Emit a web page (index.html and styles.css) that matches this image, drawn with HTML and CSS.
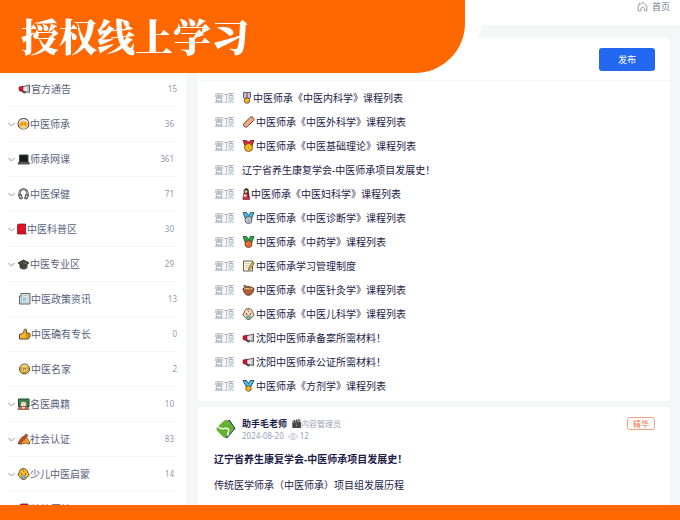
FILE: index.html
```html
<!DOCTYPE html>
<html lang="zh-CN">
<head>
  <meta charset="UTF-8">
  <meta name="viewport" content="width=device-width, initial-scale=1.0">
  <title>授权线上学习</title>
  <link rel="stylesheet" href="styles.css">
</head>
<body>
  <svg class="sprite" aria-hidden="true">
    <symbol id="chevron" viewBox="0 0 14 14"><path d="M1 4l6 6 6-6" fill="none" stroke="#8a93a6" stroke-width="2"/></symbol>
    <symbol id="home" viewBox="0 0 20 20"><path d="M5 18H2V9l2-1V4l2 2 4-4 8 7v9h-4v-4c0-3-7-3-7 0v4H5" fill="none" stroke="#7d8596" stroke-width="1.4"/></symbol>
    <symbol id="eye" viewBox="0 0 20 14"><path d="M1 7c4-8 14-8 18 0-4 8-14 8-18 0z" fill="none" stroke="#a3acbd" stroke-width="1.4"/><circle cx="10" cy="7" r="3" fill="none" stroke="#a3acbd" stroke-width="1.4"/></symbol>
    <symbol id="horn" viewBox="0 0 24 24"><path d="M8 15l2 5h4l-1-4" fill="#999" stroke="#222" stroke-width="1.5"/><path d="M7 8l15-4v15L7 16z" fill="#e5e9e9" stroke="#333" stroke-width="1.6"/><path d="M1 8l8-2v12l-8-3z" fill="#d81228" stroke="#601018"/><path d="M19 5v13" stroke="#888" stroke-width="1.5"/></symbol>
    <symbol id="elder" viewBox="0 0 24 24"><path d="M2 16C-1 6 5 1 12 1s13 5 10 15c-2 8-18 8-20 0z" fill="#e4e2de" stroke="#3c3a38" stroke-width="2"/><path d="M4 11c1-6 15-6 16 0v6c-2 6-14 6-16 0z" fill="#fbae24"/><path d="M6 18c3-4 9-4 12 0-1 5-11 5-12 0z" fill="#f0cfa0"/><path d="M7 12h3m4 0h3" stroke="#8a5a20" stroke-width="1.6"/></symbol>
    <symbol id="laptop" viewBox="0 0 24 24"><path d="M4 4h17v14H4z" fill="#181b1e" stroke="#3c4144" stroke-width="2"/><path d="M3 18h19l2 4H1z" fill="#777" stroke="#222" stroke-width="1.5"/></symbol>
    <symbol id="headset" viewBox="0 0 24 24"><path d="M4 16C1-2 23-2 20 16" fill="none" stroke="#3a3a3a" stroke-width="4"/><path d="M4 15C2-1 22-1 20 15" fill="none" stroke="#ddd" stroke-width="1.6"/><path d="M2 14l5-2 3 9-5 1zM22 14l-5-2-3 9 5 1z" fill="#b5b5b5" stroke="#2c2c2c" stroke-width="1.6"/></symbol>
    <symbol id="book" viewBox="0 0 20 24"><path d="M3 2h14v17l2 3H1V4z" fill="#e81027" stroke="#7e1720" stroke-width="1.5"/><path d="M4 2v16M2 20l2-2h13" fill="none" stroke="#b01626" stroke-width="1.3"/></symbol>
    <symbol id="cap" viewBox="0 0 24 24"><path d="M5 11v8c4 4 11 4 14 0v-8" fill="#514f46" stroke="#222" stroke-width="1.6"/><path d="M1 10l11-6 11 6-11 7z" fill="#4b4c45" stroke="#20211f" stroke-width="1.6"/><path d="M12 10l7 2v6" fill="none" stroke="#a08433" stroke-width="1.3"/></symbol>
    <symbol id="news" viewBox="0 0 24 24"><path d="M5 1h18v21H2V6h3z" fill="#dce6ea" stroke="#4a565c" stroke-width="1.8"/><path d="M6 5v15" stroke="#8a979e" stroke-width="1.3"/><path d="M9 5h11M9 18h11" stroke="#a9b7bf" stroke-width="1.5"/><path d="M9 9h6v6H9z" fill="#8fc3de"/><path d="M17 9h3m-3 4h3" stroke="#a9b7bf" stroke-width="1.5"/></symbol>
    <symbol id="thumb" viewBox="0 0 24 24"><path d="M2 13l6-2c4-3 2-9 6-9 4 1 1 7 1 8h6c4 1 2 11-2 12H2z" fill="#f9b62a" stroke="#3d2b14" stroke-width="1.7"/><path d="M15 14h6m-6 4h6" stroke="#704b18" stroke-width="1.3"/></symbol>
    <symbol id="glasses" viewBox="0 0 24 24"><circle cx="12" cy="12" r="10" fill="#f7c548" stroke="#5c4b2d" stroke-width="2"/><path d="M4 8C7 1 17 1 20 8c-5-2-11-2-16 0z" fill="#e6d9a8"/><path d="M5 10h5v4H5zM14 10h5v4h-5zM10 11h4" fill="#ffe8a6" stroke="#8a7038" stroke-width="1.2"/><path d="M8 18q4 2 8 0" fill="none" stroke="#6b4720" stroke-width="1.4"/></symbol>
    <symbol id="teacher" viewBox="0 0 24 24"><path d="M2 2h21v15H2z" fill="#2b9650" stroke="#184927" stroke-width="2"/><path d="M5 19v-9c0-6 14-6 14 0v9" fill="#8b8885" stroke="#444"/><path d="M7 10c2-3 8-3 10 0v6H7z" fill="#f5d9bf"/><path d="M1 23c1-7 6-7 9-5h4c5-2 8-2 9 5z" fill="#d9604b" stroke="#45312d"/><path d="M8 18l4 4 4-4z" fill="#eee"/></symbol>
    <symbol id="writing" viewBox="0 0 24 24"><path d="M2 22C3 13 9 6 15 7c6 2 5 8 9 10v5l-8-2-7 2z" fill="#fda321" stroke="#5a3317" stroke-width="1.5"/><path d="M2 20L17 2l4 3L6 21z" fill="#d8492e" stroke="#50312b" stroke-width="1.3"/><path d="M10 17c2-3 6-4 8-2" fill="none" stroke="#a8651c" stroke-width="1.5"/></symbol>
    <symbol id="baby" viewBox="0 0 24 24"><path d="M3 10C5 1 8 2 12 1c5 1 7 2 9 9 4 4 1 7-1 7-4 8-12 8-16 0-3-1-4-5-1-7z" fill="#fbbd33" stroke="#543b1c" stroke-width="1.8"/><path d="M12 2c-4 2 2 4 0 6" fill="none" stroke="#654216" stroke-width="1.4"/><circle cx="8" cy="12" r="1.3" fill="#382812"/><circle cx="16" cy="12" r="1.3" fill="#382812"/><ellipse cx="12" cy="18" rx="4" ry="3" fill="#6cc1e0" stroke="#39758b"/></symbol>
    <symbol id="infant" viewBox="0 0 24 24"><path d="M3 10C5 1 8 2 12 1c5 1 7 2 9 9 4 4 1 7-1 7-4 8-12 8-16 0-3-1-4-5-1-7z" fill="#fad6bb" stroke="#4d4037" stroke-width="1.8"/><path d="M12 2c-4 2 2 4 0 6" fill="none" stroke="#63483b" stroke-width="1.4"/><circle cx="8" cy="12" r="1.3" fill="#30231d"/><circle cx="16" cy="12" r="1.3" fill="#30231d"/><ellipse cx="12" cy="18" rx="4" ry="3" fill="#64c3aa" stroke="#31765e"/></symbol>
    <symbol id="ribbon" viewBox="0 0 18 24"><path d="M2 1h14v10l-5 4H7l-5-4z" fill="#b1c9e4" stroke="#35414f" stroke-width="1.6"/><path d="M9 1v12" stroke="#e14e4e" stroke-width="3"/><circle cx="9" cy="17" r="5.5" fill="#f5b82c" stroke="#493b20" stroke-width="1.6"/></symbol>
    <symbol id="bread" viewBox="0 0 24 24"><path d="M3 15L15 3c4-4 10 2 7 6L10 21c-4 4-11-2-7-6z" fill="#f2a983" stroke="#593525" stroke-width="1.8"/><path d="M8 14l2 2m3-7l2 2" stroke="#dd8d68" stroke-width="1.4"/></symbol>
    <symbol id="medal-gold" viewBox="0 0 24 24"><path d="M1 1h7l4 3 4-3h7l-5 13H6z" fill="#dd2537" stroke="#521c21" stroke-width="1.5"/><circle cx="12" cy="15" r="8" fill="#f8b91c" stroke="#5c421b" stroke-width="1.6"/><path d="M12 12v6" stroke="#e39a1a" stroke-width="2"/></symbol>
    <symbol id="medal-silver" viewBox="0 0 24 24"><path d="M1 1h7l4 6 4-6h7l-5 13H6z" fill="#46b5e8" stroke="#1c3c52" stroke-width="1.5"/><circle cx="12" cy="16" r="7" fill="#c6ced2" stroke="#3c464b" stroke-width="1.6"/><path d="M10 14h4l-3 5h4" fill="none" stroke="#8b969c" stroke-width="1.4"/></symbol>
    <symbol id="medal-bronze" viewBox="0 0 24 24"><path d="M1 1h7l4 6 4-6h7l-5 13H6z" fill="#22a749" stroke="#173d21" stroke-width="1.5"/><circle cx="12" cy="16" r="7" fill="#ed7439" stroke="#572b19" stroke-width="1.6"/><path d="M10 13h4l-2 3 2 3h-4" fill="none" stroke="#c9572b" stroke-width="1.4"/></symbol>
    <symbol id="medal-sport" viewBox="0 0 24 24"><path d="M1 1h7l4 6 4-6h7l-7 13H8z" fill="#4bc0ef" stroke="#173a4d" stroke-width="1.7"/><circle cx="12" cy="17" r="5.5" fill="#f7b81f" stroke="#59431d" stroke-width="1.6"/></symbol>
    <symbol id="mother" viewBox="0 0 16 24"><path d="M4 9C2-1 14-1 13 7l2 15H2z" fill="#33202a" stroke="#221b1c"/><circle cx="8" cy="7" r="3" fill="#f2bd96"/><path d="M3 12l8-2 4 13H2z" fill="#d92d40" stroke="#501f25"/><circle cx="6" cy="15" r="3" fill="#f6d6bd"/></symbol>
    <symbol id="memo" viewBox="0 0 24 24"><path d="M2 2h18v20H2z" fill="#fff6d9" stroke="#514b3c" stroke-width="1.8"/><path d="M5 7h11M5 11h10M5 15h8" stroke="#bdb596" stroke-width="1.3"/><path d="M13 15L20 4l4 2-8 12-4 2z" fill="#edb748" stroke="#4e402b" stroke-width="1.2"/></symbol>
    <symbol id="bowl" viewBox="0 0 24 24"><path d="M1 9c2 18 20 18 22 0-6-4-15-5-22 0z" fill="#b65f32" stroke="#3d251b" stroke-width="1.7"/><ellipse cx="12" cy="9" rx="9" ry="3" fill="#e9b37c" stroke="#56341d"/><path d="M2 3l14 5" stroke="#8b4e2d" stroke-width="3"/></symbol>
    <symbol id="clapper" viewBox="0 0 24 24"><path d="M2 9h21v14H2z" fill="#37383a" stroke="#17181a" stroke-width="1.5"/><path d="M1 5l20-4 1 5L2 9z" fill="#eee" stroke="#222"/><path d="M5 4l3 4m3-5l3 4m3-5l3 4" stroke="#222" stroke-width="3"/><path d="M5 13h15m-15 5h15M12 11v10" stroke="#aaa"/></symbol>
    <symbol id="logo" viewBox="0 0 42 42"><path d="M24 2h5l12 18-17 20h-6l17-20z" fill="#28298f"/><path d="M2 18L16 4q4-3 10-1 2 1 3 3l8 11q2 3 0 6L23 38q-4 3-8 0L2 24q-2-3 0-6z" fill="#65b32f"/><path d="M3 15q6 7 14 5c9-2 12 3 8 9-1 2 0 4 2 5" fill="none" stroke="#fff" stroke-width="3"/></symbol>
  </svg>

  <div class="banner">
    <h1>授权线上学习</h1>
  </div>

  <header class="topbar">
    <a class="home-link" href="#"><svg class="home-icon"><use href="#home"/></svg>首页</a>
  </header>

  <div class="layout">
    <nav class="sidebar">
      <a class="cat leaf" href="#"><svg class="emoji"><use href="#horn"/></svg><span class="cat-name">官方通告</span><span class="count">15</span></a>
      <a class="cat" href="#"><svg class="arrow"><use href="#chevron"/></svg><svg class="emoji"><use href="#elder"/></svg><span class="cat-name">中医师承</span><span class="count">36</span></a>
      <a class="cat" href="#"><svg class="arrow"><use href="#chevron"/></svg><svg class="emoji"><use href="#laptop"/></svg><span class="cat-name">师承网课</span><span class="count">361</span></a>
      <a class="cat" href="#"><svg class="arrow"><use href="#chevron"/></svg><svg class="emoji"><use href="#headset"/></svg><span class="cat-name">中医保健</span><span class="count">71</span></a>
      <a class="cat" href="#"><svg class="arrow"><use href="#chevron"/></svg><svg class="emoji narrow"><use href="#book"/></svg><span class="cat-name">中医科普区</span><span class="count">30</span></a>
      <a class="cat" href="#"><svg class="arrow"><use href="#chevron"/></svg><svg class="emoji"><use href="#cap"/></svg><span class="cat-name">中医专业区</span><span class="count">29</span></a>
      <a class="cat leaf" href="#"><svg class="emoji"><use href="#news"/></svg><span class="cat-name">中医政策资讯</span><span class="count">13</span></a>
      <a class="cat leaf" href="#"><svg class="emoji"><use href="#thumb"/></svg><span class="cat-name">中医确有专长</span><span class="count">0</span></a>
      <a class="cat leaf" href="#"><svg class="emoji"><use href="#glasses"/></svg><span class="cat-name">中医名家</span><span class="count">2</span></a>
      <a class="cat" href="#"><svg class="arrow"><use href="#chevron"/></svg><svg class="emoji"><use href="#teacher"/></svg><span class="cat-name">名医典籍</span><span class="count">10</span></a>
      <a class="cat" href="#"><svg class="arrow"><use href="#chevron"/></svg><svg class="emoji"><use href="#writing"/></svg><span class="cat-name">社会认证</span><span class="count">83</span></a>
      <a class="cat" href="#"><svg class="arrow"><use href="#chevron"/></svg><svg class="emoji"><use href="#baby"/></svg><span class="cat-name">少儿中医启蒙</span><span class="count">14</span></a>
      <a class="cat leaf" href="#"><svg class="emoji"><use href="#book"/></svg><span class="cat-name">站管网站</span></a>
    </nav>

    <main class="content">
      <section class="card">
        <div class="card-head">
          <button class="publish" type="button">发布</button>
        </div>
        <ul class="pinned">
          <li><span class="pin">置顶</span><a href="#"><svg class="emoji narrow"><use href="#ribbon"/></svg>中医师承《中医内科学》课程列表</a></li>
          <li><span class="pin">置顶</span><a href="#"><svg class="emoji"><use href="#bread"/></svg>中医师承《中医外科学》课程列表</a></li>
          <li><span class="pin">置顶</span><a href="#"><svg class="emoji"><use href="#medal-gold"/></svg>中医师承《中医基础理论》课程列表</a></li>
          <li><span class="pin">置顶</span><a href="#">辽宁省养生康复学会-中医师承项目发展史！</a></li>
          <li><span class="pin">置顶</span><a href="#"><svg class="emoji slim"><use href="#mother"/></svg>中医师承《中医妇科学》课程列表</a></li>
          <li><span class="pin">置顶</span><a href="#"><svg class="emoji"><use href="#medal-silver"/></svg>中医师承《中医诊断学》课程列表</a></li>
          <li><span class="pin">置顶</span><a href="#"><svg class="emoji"><use href="#medal-bronze"/></svg>中医师承《中药学》课程列表</a></li>
          <li><span class="pin">置顶</span><a href="#"><svg class="emoji"><use href="#memo"/></svg>中医师承学习管理制度</a></li>
          <li><span class="pin">置顶</span><a href="#"><svg class="emoji"><use href="#bowl"/></svg>中医师承《中医针灸学》课程列表</a></li>
          <li><span class="pin">置顶</span><a href="#"><svg class="emoji"><use href="#infant"/></svg>中医师承《中医儿科学》课程列表</a></li>
          <li><span class="pin">置顶</span><a href="#"><svg class="emoji"><use href="#horn"/></svg>沈阳中医师承备案所需材料！</a></li>
          <li><span class="pin">置顶</span><a href="#"><svg class="emoji"><use href="#horn"/></svg>沈阳中医师承公证所需材料！</a></li>
          <li><span class="pin">置顶</span><a href="#"><svg class="emoji"><use href="#medal-sport"/></svg>中医师承《方剂学》课程列表</a></li>
        </ul>
      </section>

      <article class="card post">
        <div class="post-head">
          <svg class="avatar"><use href="#logo"/></svg>
          <div class="post-info">
            <div class="author"><strong>助手毛老师</strong><svg class="role-icon"><use href="#clapper"/></svg><span class="role">内容管理员</span></div>
            <div class="meta"><time datetime="2024-08-20">2024-08-20</time><svg class="eye"><use href="#eye"/></svg>12</div>
          </div>
          <span class="badge">精华</span>
        </div>
        <h2>辽宁省养生康复学会-中医师承项目发展史！</h2>
        <p>传统医学师承（中医师承）项目组发展历程</p>
      </article>
    </main>
  </div>

  <div class="bottom-bar"></div>
</body>
</html>
```
FILE: styles.css
```css
* {
  box-sizing: border-box;
}

body {
  margin: 0;
  height: 100vh;
  overflow: hidden;
  display: flex;
  flex-direction: column;
  font-family: "Noto Sans", "Noto Sans CJK SC", sans-serif;
  font-size: 10px;
  line-height: 16px;
  color: #1b1b48;
  background-color: #f4f6f8;
}

a {
  color: inherit;
  text-decoration: none;
}

svg {
  flex: none;
}

.sprite {
  position: absolute;
  width: 0;
  height: 0;
}

/* Banner over the top of the forum */
.banner {
  position: fixed;
  top: 0;
  left: 0;
  z-index: 10;
  padding-right: 18px;
  background-color: #fff;
  border-bottom-right-radius: 60px;
}

.banner h1 {
  margin: 0;
  padding: 8px 216px 11px 21px;
  font-family: "Noto Serif CJK SC", "Noto Sans CJK SC", serif;
  font-size: 38px;
  font-weight: 900;
  line-height: 54px;
  color: #fff;
  background-color: #ff6700;
  border-bottom-right-radius: 50px;
}

.bottom-bar {
  position: fixed;
  bottom: 0;
  left: 0;
  right: 0;
  z-index: 10;
  height: 15px;
  background-color: #ff6700;
}

.topbar {
  flex: none;
  display: flex;
  justify-content: flex-end;
  height: 25px;
  padding-right: 10px;
  background-color: #fff;
}

.home-link {
  display: flex;
  align-items: center;
  gap: 4px;
  height: 13px;
  font-size: 9px;
  color: #6f7788;
}

.home-icon {
  width: 11px;
  height: 11px;
}

.layout {
  flex: 1;
  display: flex;
  min-height: 0;
}

.sidebar {
  flex: none;
  width: 186px;
  padding: 47px 9px 0 8px;
  background-color: #fff;
}

.cat {
  display: flex;
  align-items: center;
  height: 35px;
  padding-right: 3px;
  border-bottom: 1px solid #f5f6f8;
  color: #58627d;
}

.cat.leaf {
  padding-left: 10px;
  padding-right: 0;
}

.cat-name {
  flex: 1;
}

.count {
  font-size: 8px;
  color: #8f99ae;
}

.arrow {
  width: 7px;
  height: 7px;
  margin-right: 2px;
}

.emoji {
  width: 13px;
  height: 12px;
}

.emoji.narrow {
  width: 10px;
}

.emoji.slim {
  width: 8px;
}

.content {
  flex: 1;
  padding: 13px 10px 0 12px;
}

.card {
  margin-bottom: 6px;
  background-color: #fff;
  border-radius: 3px;
}

.card-head {
  display: flex;
  justify-content: flex-end;
  padding: 10px 15px 9px;
  border-bottom: 1px solid #f6f7f9;
}

.publish {
  width: 56px;
  height: 23px;
  padding: 0;
  font-family: inherit;
  font-size: 9px;
  color: #fff;
  background-color: #2468f2;
  border: none;
  border-radius: 3px;
  cursor: pointer;
}

.pinned {
  margin: 0;
  padding: 5px 15px 3px 16px;
  list-style: none;
}

.pinned li {
  display: flex;
  align-items: center;
  gap: 8px;
  height: 24px;
}

.pinned a {
  display: flex;
  align-items: center;
}

.pinned .emoji {
  margin-right: 1px;
}

.pin {
  color: #98a2b8;
}

.post {
  padding: 10px 15px 40px 16px;
}

.post-head {
  display: flex;
  align-items: flex-start;
  gap: 4px;
}

.avatar {
  width: 24px;
  height: 24px;
  padding: 2px;
}

.post-info {
  flex: 1;
}

.author,
.meta {
  display: flex;
  align-items: center;
  height: 13px;
  font-size: 8px;
  color: #98a2b8;
}

.author strong {
  font-size: 9px;
  color: #1b1b48;
}

.role-icon {
  width: 9px;
  height: 9px;
  margin-left: 5px;
}

.meta {
  height: 12px;
}

.eye {
  width: 10px;
  height: 7px;
  margin: 0 2px 0 4px;
}

.badge {
  padding: 0 5px;
  font-size: 8px;
  line-height: 11px;
  color: #ee7443;
  border: 1px solid #f3a27f;
  border-radius: 3px;
}

.post h2 {
  margin: 9px 0 10px;
  font-size: 10px;
  line-height: 16px;
}

.post p {
  margin: 0;
}
```
